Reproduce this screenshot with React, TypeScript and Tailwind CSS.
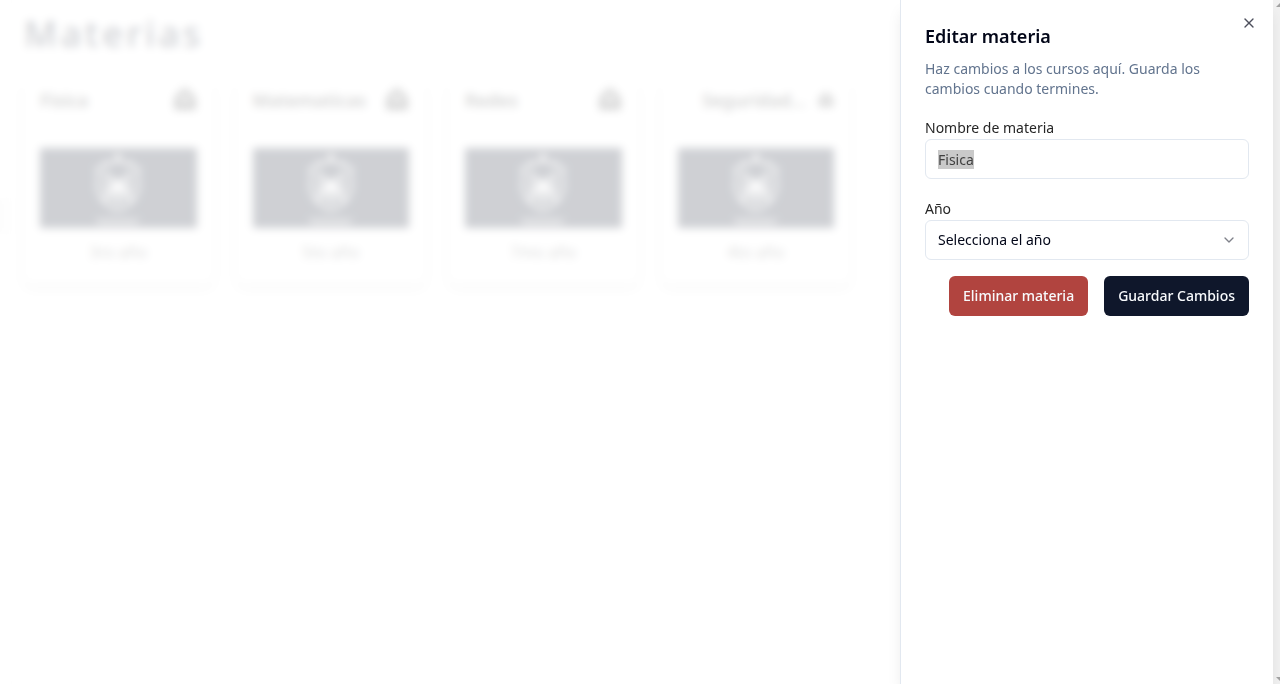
import { useEffect, useRef } from 'react';
import { ChevronDown, X } from 'lucide-react';

const subjects = [
  { name: 'Fisica', year: '3ro año', long: false },
  { name: 'Matematicas', year: '5to año', long: false },
  { name: 'Redes', year: '7mo año', long: false },
  { name: 'Seguridad...', year: '4to año', long: true },
];

function Crest() {
  return (
    <svg viewBox="0 0 56 80" className="h-20 w-14" fill="none" stroke="white" aria-hidden="true">
      <path d="M28 5 32 14H24Z" fill="white" strokeWidth="1" />
      <path
        d="M22 17c-3-1-5-3-6-4-1 4-4 6-9 8 3 5 1 9 0 14 0 13 8 23 21 27 13-4 21-14 21-27-1-5-3-9 0-14-5-2-8-4-9-8-1 1-3 3-6 4"
        strokeWidth="3"
        strokeDasharray="7 2"
      />
      <path d="m14 24 28 28M42 24 14 52M28 30v24M14 40h28" strokeWidth="3" />
      <path d="M18 30c-4 8-2 18 10 24 12-6 14-16 10-24" strokeWidth="2" />
      <circle cx="28" cy="39" r="5" fill="white" />
      <path d="M6 72h44M9 75h38" strokeWidth="2" strokeDasharray="4 2" />
    </svg>
  );
}

function BagIcon({ small }: { small: boolean }) {
  return (
    <svg viewBox="0 0 24 24" className={small ? 'size-4 shrink-0' : 'size-6 shrink-0'} aria-hidden="true">
      <path
        fillRule="evenodd"
        fill="#444"
        d="M7 4c0-5 10-5 10 0 4 2 6 5 6 9v9H1v-9c0-4 2-7 6-9Zm3 0h4c0-2-4-2-4 0ZM8 10v4h8v-4c-2-2-6-2-8 0Z"
      />
    </svg>
  );
}

export default function App() {
  const nameRef = useRef<HTMLInputElement>(null);

  useEffect(() => {
    nameRef.current?.focus();
    nameRef.current?.select();
  }, []);

  return (
    <div className="flex min-h-screen bg-white font-['Noto_Sans','Open_Sans',sans-serif] text-sm text-slate-950">
      <div className="relative flex min-w-0 flex-1">
        <aside className="flex w-3 shrink-0 flex-col border-r border-neutral-100 pt-[198px]">
          <span className="h-9 w-2 bg-neutral-100" />
        </aside>
        <main className="min-w-0 flex-1 px-3 pt-3">
          <h1 className="text-4xl leading-11 font-medium tracking-widest text-slate-900">Materias</h1>
          <section className="mt-6 grid max-w-[826px] grid-cols-4 gap-6">
            {subjects.map((s) => (
              <article key={s.name} className="flex flex-col rounded-lg px-4 pt-2 pb-5 shadow-[0_4px_10px_rgba(0,0,0,0.16)]">
                <header
                  className={
                    s.long
                      ? 'flex h-6 items-center justify-end gap-3'
                      : 'flex h-6 items-center justify-between'
                  }
                >
                  <h2 className="text-lg font-semibold whitespace-nowrap text-neutral-800">{s.name}</h2>
                  <BagIcon small={s.long} />
                </header>
                <div className="mt-9 flex justify-center bg-slate-900">
                  <Crest />
                </div>
                <p className="mt-3 text-center text-base text-neutral-600">{s.year}</p>
              </article>
            ))}
          </section>
        </main>
        <div className="absolute inset-0 bg-white/80 backdrop-blur-xs" />
      </div>

      <div
        role="dialog"
        aria-labelledby="sheet-title"
        className="relative w-[373px] shrink-0 border-l border-slate-200 bg-white px-6 pt-6 shadow-lg"
      >
        <button type="button" aria-label="Cerrar" className="absolute top-[15px] right-4 text-slate-950 opacity-70">
          <X className="size-4" />
        </button>
        <h2 id="sheet-title" className="text-lg leading-6 font-semibold">
          Editar materia
        </h2>
        <p className="mt-[11px] leading-5 text-slate-500">
          Haz cambios a los cursos aquí. Guarda los cambios cuando termines.
        </p>
        <form className="mt-[19px]" onSubmit={(e) => e.preventDefault()}>
          <label htmlFor="name" className="block leading-5 text-neutral-800">
            Nombre de materia
          </label>
          <input
            id="name"
            ref={nameRef}
            defaultValue="Fisica"
            className="mt-px block h-10 w-full rounded-md border border-slate-200 px-3 text-neutral-700 outline-none selection:bg-[#c8c8c8]/99 selection:text-neutral-700"
          />
          <label htmlFor="year" className="mt-5 block leading-5 text-neutral-800">
            Año
          </label>
          <div className="relative mt-px">
            <select
              id="year"
              className="block h-10 w-full appearance-none rounded-md border border-slate-200 bg-white px-3"
            >
              <option>Selecciona el año</option>
              <option>3ro año</option>
              <option>4to año</option>
              <option>5to año</option>
              <option>7mo año</option>
            </select>
            <ChevronDown className="pointer-events-none absolute top-3 right-3 size-4 opacity-50" />
          </div>
          <div className="mt-4 flex justify-end gap-4">
            <button type="button" className="h-10 rounded-md bg-[#b1443f] px-3.5 font-medium text-slate-50">
              Eliminar materia
            </button>
            <button type="submit" className="h-10 rounded-md bg-slate-900 px-3.5 font-medium text-slate-50">
              Guardar Cambios
            </button>
          </div>
        </form>
      </div>

      <div className="flex w-[7px] shrink-0 flex-col justify-between overflow-hidden bg-[#f1f1f1]" aria-hidden="true">
        <svg viewBox="0 0 7 12" className="h-3 w-[7px]">
          <path d="M3 7 7 3v4Z" fill="#a3a3a3" />
        </svg>
        <svg viewBox="0 0 7 12" className="h-3 w-[7px]">
          <path d="m3 5 4 4V5Z" fill="#a3a3a3" />
        </svg>
      </div>
    </div>
  );
}
